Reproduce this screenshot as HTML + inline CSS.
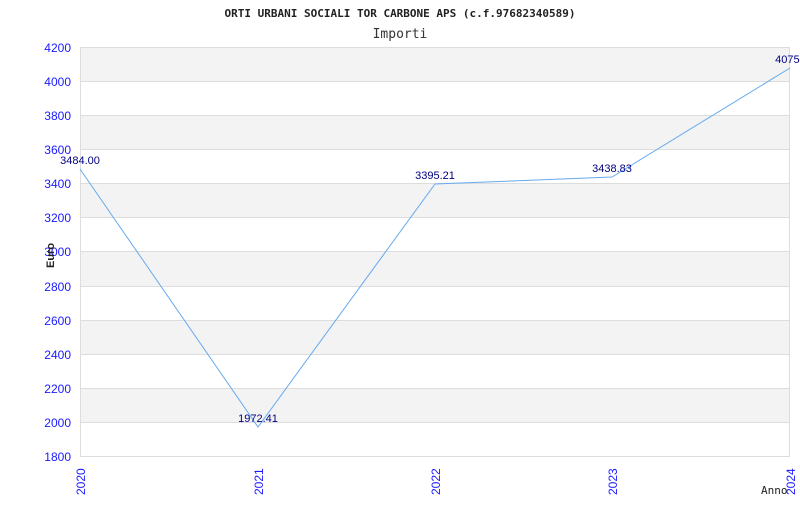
<!DOCTYPE html>
<html><head><style>
body{margin:0;width:800px;height:500px;background:#fff;overflow:hidden}
</style></head><body>
<svg width="800" height="500" xmlns="http://www.w3.org/2000/svg" font-family="Liberation Sans, sans-serif">
<text x="400" y="17" text-anchor="middle" font-family="DejaVu Sans Mono, monospace" font-size="11" font-weight="bold" fill="#222">ORTI URBANI SOCIALI TOR CARBONE APS (c.f.97682340589)</text>
<text x="400" y="38" text-anchor="middle" font-family="DejaVu Sans Mono, monospace" font-size="13" fill="#333">Importi</text>
<g fill="#f3f3f3">
<rect x="80" y="47" width="710" height="34"/>
<rect x="80" y="115" width="710" height="34"/>
<rect x="80" y="183" width="710" height="34"/>
<rect x="80" y="251" width="710" height="35"/>
<rect x="80" y="320" width="710" height="34"/>
<rect x="80" y="388" width="710" height="34"/>
</g>
<g stroke="#ddd" stroke-width="1">
<line x1="80" y1="47.5" x2="790" y2="47.5"/><line x1="80" y1="81.5" x2="790" y2="81.5"/>
<line x1="80" y1="115.5" x2="790" y2="115.5"/><line x1="80" y1="149.5" x2="790" y2="149.5"/>
<line x1="80" y1="183.5" x2="790" y2="183.5"/><line x1="80" y1="217.5" x2="790" y2="217.5"/>
<line x1="80" y1="251.5" x2="790" y2="251.5"/><line x1="80" y1="286.5" x2="790" y2="286.5"/>
<line x1="80" y1="320.5" x2="790" y2="320.5"/><line x1="80" y1="354.5" x2="790" y2="354.5"/>
<line x1="80" y1="388.5" x2="790" y2="388.5"/><line x1="80" y1="422.5" x2="790" y2="422.5"/>
<line x1="80.5" y1="47" x2="80.5" y2="456"/><line x1="80" y1="456.5" x2="790" y2="456.5"/>
<line x1="789.5" y1="47" x2="789.5" y2="456"/>
</g>
<g fill="#1a1aff" font-size="12" text-anchor="end">
<text x="71" y="52">4200</text><text x="71" y="86">4000</text><text x="71" y="120">3800</text>
<text x="71" y="154">3600</text><text x="71" y="188">3400</text><text x="71" y="222">3200</text>
<text x="71" y="256">3000</text><text x="71" y="291">2800</text><text x="71" y="325">2600</text>
<text x="71" y="359">2400</text><text x="71" y="393">2200</text><text x="71" y="427">2000</text>
<text x="71" y="461">1800</text>
</g>
<g fill="#1a1aff" font-size="12">
<text transform="translate(85,495) rotate(-90)">2020</text>
<text transform="translate(263,495) rotate(-90)">2021</text>
<text transform="translate(440,495) rotate(-90)">2022</text>
<text transform="translate(617,495) rotate(-90)">2023</text>
<text transform="translate(795,495) rotate(-90)">2024</text>
</g>
<text transform="translate(54,268) rotate(-90)" font-size="11" font-weight="bold" fill="#222">Euro</text>
<text x="761" y="494" font-family="DejaVu Sans Mono, monospace" font-size="11" fill="#222">Anno</text>
<polyline fill="none" stroke="#66aaee" stroke-width="1" points="80,169 258,427 435,184 612,177 790,68"/>
<g fill="#000080" font-size="11" text-anchor="middle">
<text x="80" y="164">3484.00</text>
<text x="258" y="422">1972.41</text>
<text x="435" y="179">3395.21</text>
<text x="612" y="172">3438.83</text>
<text x="792" y="63">4075.5</text>
</g>
</svg>
</body></html>
